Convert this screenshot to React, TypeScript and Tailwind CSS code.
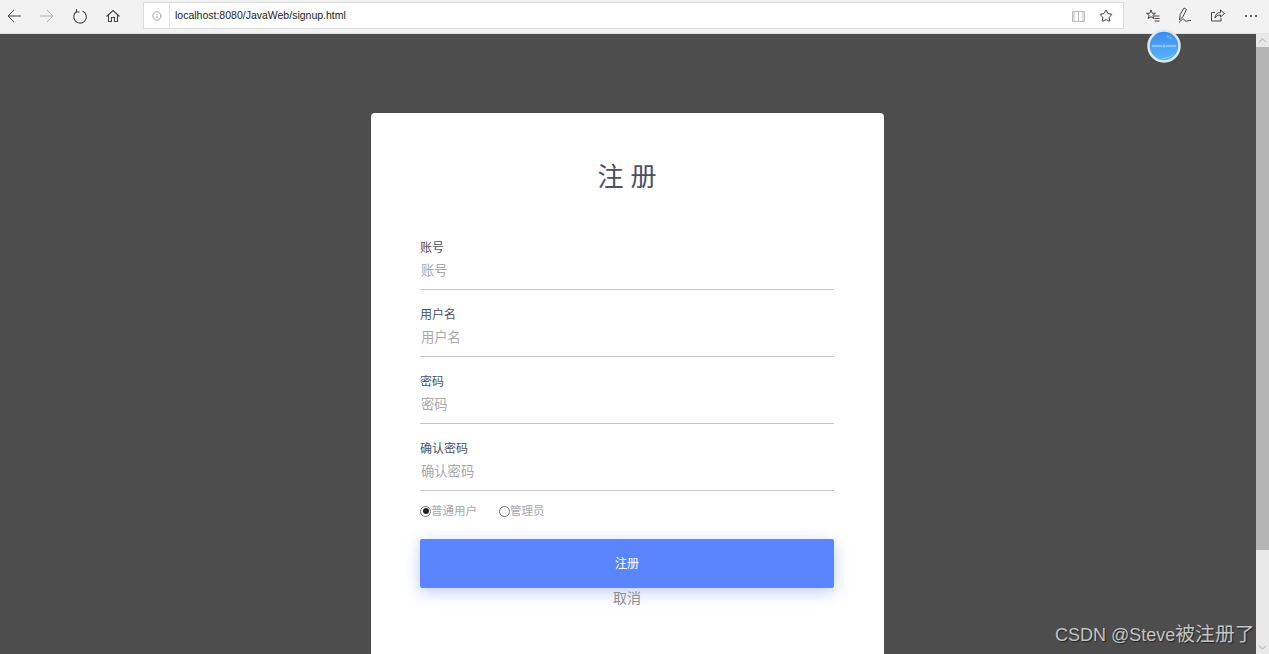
import { Info, Star, ChevronUp, ChevronDown } from "lucide-react"

const font = { fontFamily: '"Liberation Sans", "Noto Sans CJK SC", sans-serif' }

const fields = ["账号", "用户名", "密码", "确认密码"]

function Toolbar() {
  return (
    <div className="flex h-[34px] shrink-0 items-center border-b border-[#e2e2e2] bg-[#f2f2f2] pb-[2px]">
      <div className="flex w-[143px] shrink-0 items-center text-[#444]">
        <svg className="ml-[6px] h-[16px] w-[16px]" viewBox="0 0 16 16" fill="none" stroke="currentColor">
          <path d="M15 8H2M8 2L2 8l6 6" />
        </svg>
        <svg className="ml-[17px] h-[16px] w-[16px] text-[#b0b0b0]" viewBox="0 0 16 16" fill="none" stroke="currentColor">
          <path d="M1 8h13M8 2l6 6-6 6" />
        </svg>
        <svg className="ml-[17px] h-[16px] w-[16px]" viewBox="0 0 16 16" fill="none" stroke="currentColor" strokeWidth="1.1">
          <path d="M5 3.300A6.300 6.300 0 1 0 10.500 3" />
          <path d="M4.500 1v3h3" />
        </svg>
        <svg className="ml-[17px] h-[16px] w-[16px]" viewBox="0 0 16 16" fill="none" stroke="currentColor" strokeWidth="1.1">
          <path d="M1.500 8.500L8 2.500l6.500 6M3.500 7v6.500h3V9.500h3v4h3V7" />
        </svg>
      </div>
      <div className="flex h-[27px] w-[981px] shrink-0 items-center border border-[#dcdcdc] bg-white">
        <Info className="ml-[8px] h-[10px] w-[10px] text-[#777]" strokeWidth={1.5} />
        <div className="ml-[7px] h-[25px] w-px bg-[#e4e4e4]" />
        <span className="ml-[5px] text-[10.5px] text-[#222]">localhost:8080/JavaWeb/signup.html</span>
        <svg className="ml-auto h-[12px] w-[13px] text-[#bbb]" viewBox="0 0 13 12" fill="none" stroke="currentColor">
          <path d="M.5 1.500h12v10H.5zM6.500 1.500v10M2 1.500v10M11 1.500v10" />
        </svg>
        <Star className="ml-[14px] mr-[10px] h-[14px] w-[14px] text-[#222]" strokeWidth={1.5} />
      </div>
      <div className="flex flex-1 items-center text-[#444]">
        <svg className="ml-[22px] h-[14px] w-[14px]" viewBox="0 0 14 14" fill="none" stroke="currentColor">
          <path d="M5 1l1.200 3.200 3.300.1-2.600 2 .9 3.200L5 7.700 2.200 9.500l.9-3.200-2.600-2 3.300-.1zM8 7h5.500M8.500 9.500h5M8.500 12h5" />
        </svg>
        <svg className="ml-[17px] h-[17px] w-[17px]" viewBox="0 0 17 17" fill="none" stroke="currentColor">
          <path d="M2.500 13l.7-5.500L7 1l2.500 1.500-3.500 7zM2 15.500c2-1.500 3-4 4.500-3.500s1 2.500 2.500 2.300 2-1 5-.8" />
        </svg>
        <svg className="ml-[16px] h-[15px] w-[15px]" viewBox="0 0 15 15" fill="none" stroke="currentColor">
          <path d="M1.500 4.500h3.500M1.500 4.500v8.500h9.500v-3" />
          <path d="M5 10c0-3.500 2.500-5.500 5.500-5.500V2l4 3.500-4 3.500V7c-2.500 0-4.500 1-5.500 3z" />
        </svg>
        <div className="ml-[20px] flex gap-[3px]">
          <span className="h-[2px] w-[2px] rounded-full bg-[#333]" />
          <span className="h-[2px] w-[2px] rounded-full bg-[#333]" />
          <span className="h-[2px] w-[2px] rounded-full bg-[#333]" />
        </div>
      </div>
    </div>
  )
}

function Scrollbar() {
  return (
    <div className="flex w-[13px] shrink-0 flex-col bg-[#e9e9e9] text-[#999]">
      <ChevronUp className="h-[13px] w-[13px]" strokeWidth={1.5} />
      <div className="h-[503px] bg-[#b4b4b4]" />
      <ChevronDown className="mt-auto h-[13px] w-[13px]" strokeWidth={1.5} />
    </div>
  )
}

function Field({ label }: { label: string }) {
  return (
    <div className="border-b border-[#c8c8cc] pb-[6px]">
      <div className="h-[17px] text-[12px] leading-[17px] text-[#4a5164]">{label}</div>
      <div className="mt-[2px] h-[24px] pl-px text-[13.300px] leading-[24px] text-[#a8a8a8]">{label}</div>
    </div>
  )
}

function Radio({ checked, label }: { checked?: boolean; label: string }) {
  return (
    <label className="flex items-center text-[11.500px] text-[#a8a8a8]">
      <span className="mb-[2px] flex h-[11px] w-[11px] items-center justify-center rounded-full border border-[#777]">
        {checked && <span className="h-[6px] w-[6px] rounded-full bg-[#222]" />}
      </span>
      {label}
    </label>
  )
}

function SignupCard() {
  return (
    <div className="ml-[371px] mt-[79px] h-[600px] w-[513px] shrink-0 rounded-t-[4px] bg-white pl-[49px] pr-[50px] pt-[45px]">
      <h1 className="h-[38px] text-center text-[26px] leading-[38px] text-[#4a5164]">注 册</h1>
      <div className="mt-[44px] flex flex-col gap-[17px]">
        {fields.map((f) => (
          <Field key={f} label={f} />
        ))}
      </div>
      <div className="mt-[12px] flex h-[18px] items-center gap-[22px]">
        <Radio checked label="普通用户" />
        <Radio label="管理员" />
      </div>
      <button className="mt-[18px] h-[49px] w-full rounded-[2px] bg-[#5a85ff] text-[12px] text-white shadow-[0_4px_16px_rgba(90,133,255,0.4)]">
        注册
      </button>
      <div className="h-[20px] text-center text-[14px] leading-[20px] text-[#8d8d8d]">取消</div>
    </div>
  )
}

export default function App() {
  return (
    <div className="relative flex h-[654px] w-full flex-col overflow-hidden" style={font}>
      <Toolbar />
      <div className="flex min-h-0 flex-1">
        <div className="flex min-w-0 flex-1 overflow-hidden bg-[#4d4d4d]">
          <SignupCard />
        </div>
        <Scrollbar />
      </div>
      {/* floating widget on top of the page */}
      <svg className="absolute left-[1147px] top-[29px] h-[34px] w-[34px]" viewBox="0 0 34 34">
        <defs>
          <linearGradient id="globe" x1="0" y1="0" x2="0" y2="1">
            <stop offset="0" stopColor="#3b8bf0" />
            <stop offset="1" stopColor="#5ab6f8" />
          </linearGradient>
        </defs>
        <circle cx="17" cy="17" r="15.500" fill="url(#globe)" stroke="#dfe8f0" strokeWidth="2.500" />
        <path d="M5 17h10M19 17h10" stroke="#e8f2fc" strokeWidth="0.800" />
        <circle cx="17" cy="17" r="1" fill="none" stroke="#e8f2fc" strokeWidth="0.600" />
        <path d="M20 7c2 .5 4 2 5 3.500" fill="none" stroke="#cfe4fa" strokeWidth="0.800" strokeDasharray="2 1" />
        <path d="M12 30c6 .5 12-1 16-6-3 3-8 5-16 6z" fill="#9fd6fb" />
      </svg>
      <div className="absolute left-[1055px] top-[622px] flex items-baseline leading-[24px] text-[#c4c4c4] [text-shadow:1px_1px_1px_#222]">
        <span className="whitespace-pre text-[18px]">CSDN @Steve</span>
        <span className="text-[19.800px]">被注册了</span>
      </div>
    </div>
  )
}
